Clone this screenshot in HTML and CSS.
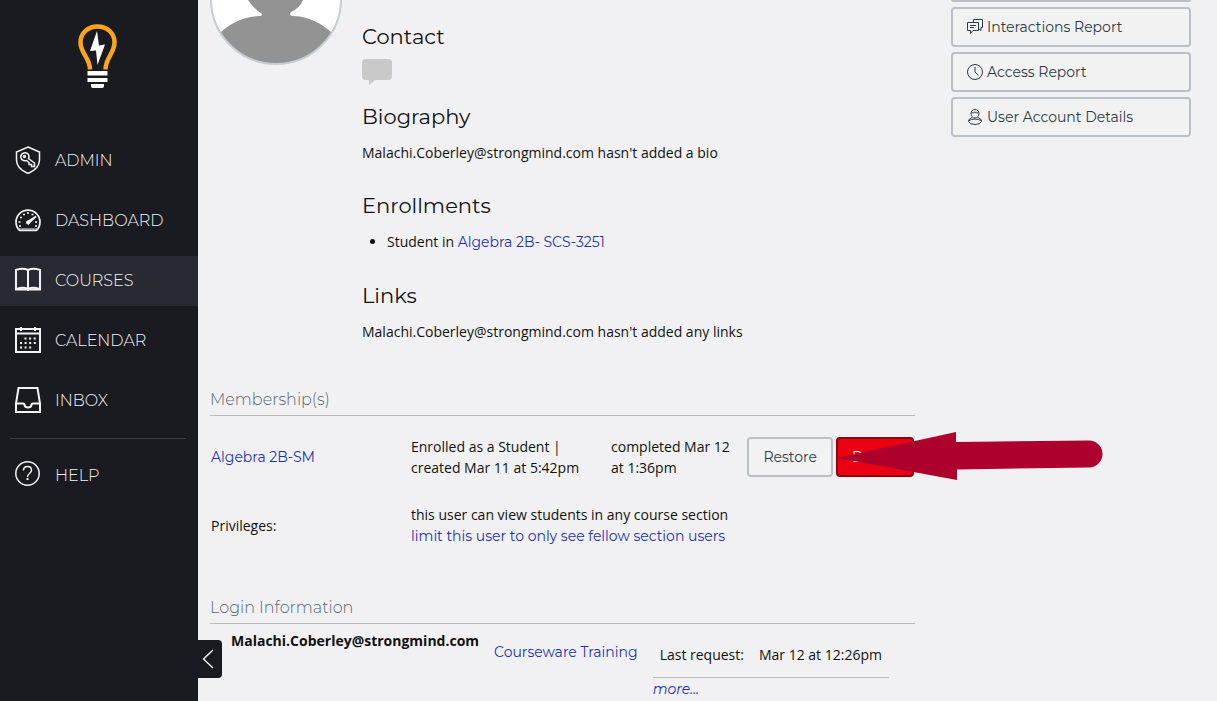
FILE: index.html
```html
<!DOCTYPE html>
<html lang="en">
<head>
<meta charset="utf-8">
<title>User Account</title>
<link rel="stylesheet" href="styles.css">
</head>
<body>
<header class="sidebar">
  <a class="logo" href="#" aria-label="Home">
    <svg width="40" height="65" viewBox="0 0 40 65">
      <path d="M12 45.500C12 34 2.500 29 2.500 18.500C2.500 9 10 2.500 19.500 2.500S36.500 9 36.500 18.500C36.500 29 27.500 34 27.500 45.500" fill="none" stroke="#faa61a" stroke-width="4.500"/>
      <path d="M19 7L12 27L18 26.500L19.500 41L27 20.500L21 21.500Z" fill="#fff"/>
      <path d="M9.500 47h20v4.500h-20zM9.500 54h20v4h-20zM13 60h13v2q0 2-2 2h-9q-2 0-2-2z" fill="#fff"/>
    </svg>
  </a>
  <nav class="menu">
    <a class="menu-item" href="#">
      <svg width="26" height="28" viewBox="0 0 26 28" fill="none" stroke="#f3f3f5" stroke-width="1.500">
        <path d="M13 1L24.500 6V14C24.500 20 20 24.500 13 27.500C6 24.500 1.500 20 1.500 14V6Z"/>
        <path d="M6.500 8.500Q9 5.500 12.500 7.500Q15 9.500 13.500 12.500L19.500 17V20.500H16.500V18.500H14V16.500L11.500 14.500Q8 15.500 6.500 13Q5 11 6.500 8.500Z"/>
        <circle cx="9.500" cy="10.500" r="1"/>
      </svg>
      <span>ADMIN</span>
    </a>
    <a class="menu-item" href="#">
      <svg width="26" height="26" viewBox="0 0 26 26" fill="none" stroke="#f3f3f5" stroke-width="1.700">
        <path d="M4.500 23.500A12 12 0 1 1 21.500 23.500Z"/>
        <path d="M4 22h18" stroke-width="1"/>
        <path d="M13 14.500L21 9.500L13.500 16.500Z" fill="#f3f3f5"/>
        <circle cx="13" cy="15.500" r="2" fill="#f3f3f5" stroke="none"/>
        <path d="M4 19h2M3.500 15h2M5 10.500h2M8 7.500h2M12 6h2M16.500 7.500h2M20 15h2M20 19h2"/>
      </svg>
      <span>DASHBOARD</span>
    </a>
    <a class="menu-item menu-item-active" href="#">
      <svg width="26" height="26" viewBox="0 0 26 26" fill="none" stroke="#f3f3f5" stroke-width="2">
        <path d="M1 3Q8 .500 13 3Q18 .500 25 3V22.500H1Z"/>
        <path d="M13 3V24M2 22Q8 19.500 13 22Q18 19.500 24 22"/>
      </svg>
      <span>COURSES</span>
    </a>
    <a class="menu-item" href="#">
      <svg width="26" height="26" viewBox="0 0 26 26" fill="none" stroke="#f3f3f5" stroke-width="2">
        <path d="M1 2H25V25H1ZM1 6.500H25M6 0V4M20 0V4"/>
        <path d="M9.500 11.500H22M5 16H22M5 20.500H18" stroke-dasharray="2 2.600"/>
      </svg>
      <span>CALENDAR</span>
    </a>
    <a class="menu-item" href="#">
      <svg width="26" height="26" viewBox="0 0 26 26" fill="none" stroke="#f3f3f5" stroke-width="2">
        <path d="M3.500 1H22.500L25 16.500V25H1V16.500ZM1 16.500H8Q9.500 16.500 9.500 18Q10 20.500 13 20.500T16.500 18Q16.500 16.500 18 16.500H25"/>
      </svg>
      <span>INBOX</span>
    </a>
  </nav>
  <div class="menu-help">
    <a class="menu-item" href="#">
      <svg width="26" height="28" viewBox="0 0 26 28" fill="none" stroke="#f3f3f5" stroke-width="1.500">
        <circle cx="12.500" cy="12.500" r="11.700"/>
        <path d="M8.500 9.500Q8.500 5.500 12.500 5.500T16.500 9Q16.500 11 14.500 12.500Q12.500 14 12.500 16"/>
        <path d="M11.500 18h2" stroke-width="2"/>
      </svg>
      <span>HELP</span>
    </a>
  </div>
  <button class="collapse" type="button" aria-label="Minimize navigation">
    <svg width="12" height="20" viewBox="0 0 12 20"><path d="M11 1L1.500 10L11 19" fill="none" stroke="#fff" stroke-width="1.300"/></svg>
  </button>
</header>

<div class="page">
  <main class="content">
    <section class="profile">
      <svg class="avatar" width="132" height="65" viewBox="0 0 132 65" role="img" aria-label="User picture">
        <circle cx="66" cy="-1" r="65" fill="#fff"/>
        <clipPath id="face"><circle cx="66" cy="-1" r="65"/></clipPath>
        <path clip-path="url(#face)" d="M38 0Q44 9 51 13Q54 16 48 16Q24 18 8 35V65H124V35Q106 17 84 16Q78 16 81 12Q90 8 93 0Z" fill="#939393"/>
        <circle cx="66" cy="-1" r="65" fill="none" stroke="#c7cdd1" stroke-width="2"/>
      </svg>
      <div class="details">
        <h2>Contact</h2>
        <a class="message" href="#" aria-label="Send message">
          <svg width="30" height="26" viewBox="0 0 30 26"><path d="M4 0H26Q30 0 30 4V17Q30 21 26 21H13L7 26V21H4Q0 21 0 17V4Q0 0 4 0Z" fill="#c9c9c9"/></svg>
        </a>
        <h2>Biography</h2>
        <p>Malachi.Coberley@strongmind.com hasn't added a bio</p>
        <h2>Enrollments</h2>
        <ul>
          <li>Student in <a href="#">Algebra 2B- SCS-3251</a></li>
        </ul>
        <h2>Links</h2>
        <p>Malachi.Coberley@strongmind.com hasn't added any links</p>
      </div>
    </section>

    <section class="memberships">
      <h3>Membership(s)</h3>
      <table class="membership-table">
        <tr>
          <td class="col-name"><a href="#">Algebra 2B-SM</a></td>
          <td class="col-role">Enrolled as a Student |<br>created Mar 11 at 5:42pm</td>
          <td class="col-state">completed Mar 12<br>at 1:36pm</td>
          <td>
            <div class="actions">
              <button class="btn" type="button">Restore</button>
              <button class="btn btn-danger" type="button">Delete</button>
              <svg class="pointer" width="267" height="48" viewBox="0 0 267 48"><path d="M0 26L119 0V10L252 8.500A13.500 13.500 0 0 1 252 35.500L120 37.500V48Z" fill="#ae002c"/></svg>
            </div>
          </td>
        </tr>
        <tr>
          <td>Privileges:</td>
          <td colspan="3">this user can view students in any course section<br><a href="#">limit this user to only see fellow section users</a></td>
        </tr>
      </table>
    </section>

    <section class="logins">
      <h3>Login Information</h3>
      <div class="login">
        <strong>Malachi.Coberley@strongmind.com</strong>
        <a class="login-account" href="#">Courseware Training</a>
        <div class="login-info">
          <div class="login-request"><span>Last request:</span><span>Mar 12 at 12:26pm</span></div>
          <a class="more" href="#">more...</a>
        </div>
      </div>
    </section>
  </main>

  <aside class="reports">
    <div class="button-edge"></div>
    <a class="btn btn-side" href="#">
      <svg width="16" height="16" viewBox="0 0 16 16" fill="none" stroke="#2d3b45" stroke-width="1">
        <path d="M6.500 3.500V.500H15.500V8.500H14V11.500L11.500 9.500M.500 3.500H11.500V11.500H6L3.500 14.500V11.500H.500ZM3 6.500H9M3 8.500H7"/>
      </svg>
      Interactions Report
    </a>
    <a class="btn btn-side" href="#">
      <svg width="16" height="16" viewBox="0 0 16 16" fill="none" stroke="#2d3b45" stroke-width="1">
        <circle cx="8" cy="8" r="7.500"/><path d="M8 3V8L11.500 11.500"/>
      </svg>
      Access Report
    </a>
    <a class="btn btn-side" href="#">
      <svg width="16" height="16" viewBox="0 0 16 16" fill="none" stroke="#2d3b45" stroke-width="1">
        <path d="M8 .500C10.500 .500 12 2 12 4.500C12 7 10.500 9 8 9S4 7 4 4.500C4 2 5.500 .500 8 .500ZM4.500 4Q7 4 8 3Q9.500 4 11.500 4"/>
        <path d="M5 8.500Q1.500 9.500 1.500 12.500Q3 15.500 8 15.500T14.500 12.500Q14.500 9.500 11 8.500"/>
        <path d="M1.500 12Q4 10 8 10T14.500 12"/>
      </svg>
      User Account Details
    </a>
  </aside>
</div>
</body>
</html>
```

FILE: styles.css
```css
* { box-sizing: border-box; }

body {
  margin: 0;
  height: 100vh;
  display: flex;
  overflow: hidden;
  background: #f1f1f4;
  color: #111;
  font: 14px/21px "Open Sans", "Noto Sans", sans-serif;
}

a {
  color: #1c31b5;
  font-family: Montserrat, Inter, sans-serif;
  text-decoration: none;
}

h2, h3, p, ul { margin: 0; font-weight: 400; }
h2, h3 { font-family: Montserrat, Inter, sans-serif; }
svg { display: block; flex: none; }

.sidebar {
  position: relative;
  flex: 0 0 198px;
  background: #1a1b20;
}

.logo {
  display: flex;
  justify-content: center;
  padding: 24px 2px 47px 0;
}

.menu { display: grid; gap: 10px; }

.menu-item {
  display: flex;
  align-items: center;
  gap: 14px;
  height: 50px;
  padding: 0 15px 2px;
  color: #f3f3f5;
  font-size: 16px;
  font-weight: 300;
}

.menu-item-active { background: #272a31; }

.menu-help {
  margin: 12px 12px 0 10px;
  padding-top: 12px;
  border-top: 1px solid #3b3c41;
}

.menu-help .menu-item { padding: 0 5px 2px; }

.collapse {
  position: absolute;
  left: 100%;
  bottom: 23px;
  width: 24px;
  height: 38px;
  padding: 0 4px;
  border: 0;
  border-radius: 0 4px 4px 0;
  background: #1a1b20;
}

.page {
  flex: 1;
  display: flex;
  gap: 36px;
  padding: 0 26px 0 12px;
}

.content { flex: 1; min-width: 0; }

.profile { display: flex; gap: 20px; }
.avatar { flex: none; }
.details { padding-top: 22px; }

h2 {
  font-size: 21px;
  line-height: 30px;
}

.message { display: block; padding: 7px 0 17px; }
.details p, .details ul { padding: 10px 0 28px; }
.details ul { padding-left: 25px; }

h3 {
  padding-bottom: 5px;
  border-bottom: 1px solid #bdbdc0;
  color: #586874;
  font-size: 16px;
  font-weight: 300;
  line-height: 20px;
}

.memberships { padding-top: 20px; }

.membership-table {
  width: 100%;
  margin-top: 20px;
  border-collapse: collapse;
}

td { padding: 0 0 26px 1px; }
.col-name, .col-role { width: 200px; }
.actions { position: relative; display: flex; justify-content: flex-end; gap: 3px; padding-right: 1px; }

.btn {
  height: 40px;
  padding: 0 14px;
  border: 2px solid #bbc0c7;
  border-radius: 4px;
  background: #f2f2f2;
  color: #2d3b45;
  font: 14px Montserrat, Inter, sans-serif;
}

.btn-danger {
  border-color: #8c0010;
  background: #ea0011;
  color: #fff;
}

.pointer {
  position: absolute;
  top: -5px;
  right: -189px;
}

.logins { padding-top: 25px; }

.login {
  display: flex;
  gap: 15px;
  padding: 6px 26px 0 21px;
}

.login-account { padding-top: 12px; }
.login-info { flex: 1; }

.login-request {
  display: flex;
  gap: 15px;
  padding: 14px 7px 12px;
  border-bottom: 1px solid #bdbdc0;
}

.more { font-style: italic; }

.reports {
  flex: 0 0 240px;
  display: flex;
  flex-direction: column;
  gap: 5px;
}

.button-edge {
  height: 2px;
  background: #bbc0c7;
  border-radius: 0 0 4px 4px;
}

.btn-side {
  display: flex;
  align-items: center;
  gap: 4px;
}
```
